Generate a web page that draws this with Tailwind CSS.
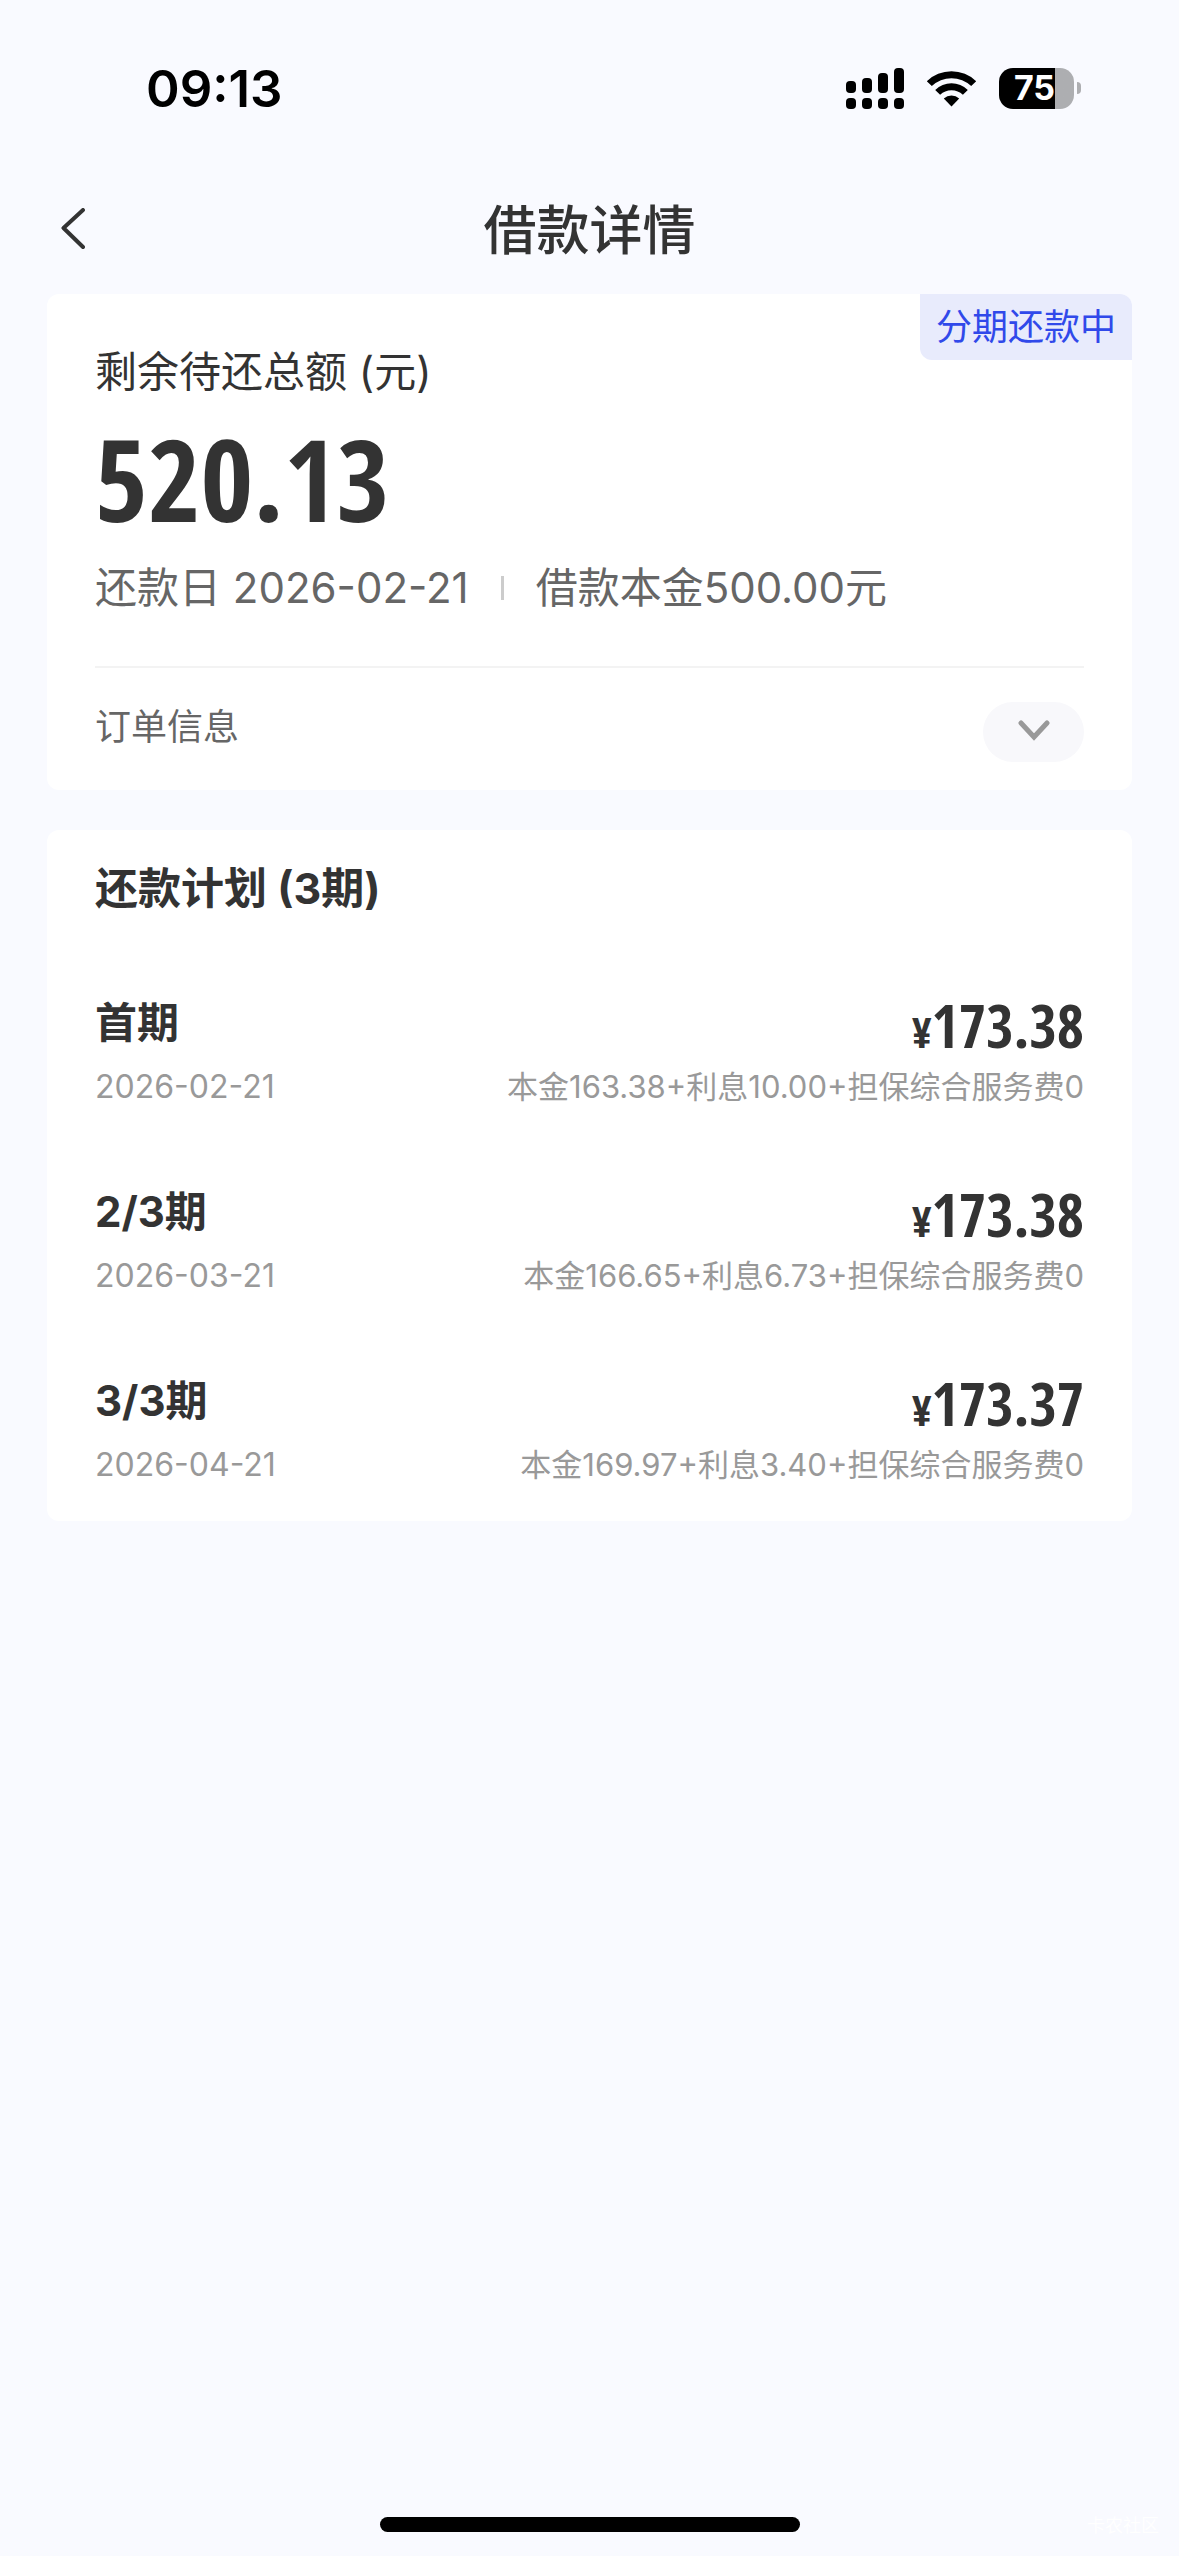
<!DOCTYPE html>
<html lang="zh-CN">
<head>
  <meta charset="UTF-8">
  <meta name="viewport" content="width=device-width, initial-scale=1.0">
  <title>借款详情</title>
  <script src="https://cdn.jsdelivr.net/npm/@tailwindcss/browser@4"></script>
</head>
<body class="relative flex min-h-screen flex-col bg-[#f9faff] font-['Inter','Noto_Sans_CJK_SC',sans-serif] text-[#333333]">

  <!-- status bar -->
  <div class="flex h-44 items-center justify-between pr-[98px] pl-[146px] text-black">
    <span class="text-[51px] leading-none font-semibold">09:13</span>
    <div class="flex items-center gap-[22px]">
      <svg class="h-[41px] w-[58px]" viewBox="0 0 58 41" fill="currentColor">
        <rect x="0" y="13" width="10" height="12" rx="4"/>
        <rect x="16" y="10" width="10" height="15" rx="4"/>
        <rect x="32" y="5" width="10" height="20" rx="4"/>
        <rect x="48" y="0" width="10" height="25" rx="4"/>
        <rect x="0" y="30" width="10" height="11" rx="4"/>
        <rect x="16" y="30" width="10" height="11" rx="4"/>
        <rect x="32" y="30" width="10" height="11" rx="4"/>
        <rect x="48" y="30" width="10" height="11" rx="4"/>
      </svg>
      <svg class="h-[37px] w-[51px]" viewBox="0 0 51 37" fill="currentColor">
        <path d="M0.8 11.2A35.5 35.5 0 0 1 50.2 11.2L45.2 16.1A28.5 28.5 0 0 0 5.8 16.1Z"/>
        <path d="M9.2 20A23.3 23.3 0 0 1 41.8 20L36.9 24.8A16.4 16.4 0 0 0 14.1 24.8Z"/>
        <path d="M17.8 28.6A11.4 11.4 0 0 1 33.2 28.6L25.5 36.6Z"/>
      </svg>
      <div class="flex items-center gap-[3px]">
        <div class="flex h-[41px] w-[75px] items-center justify-center rounded-[14px] bg-linear-to-r from-black from-75% to-[#adaeb1] to-75% pr-1 text-[34px] leading-none font-bold text-white">75</div>
        <div class="h-3 w-1 rounded-r-full bg-[#adaeb1]"></div>
      </div>
    </div>
  </div>

  <!-- title bar -->
  <header class="grid h-[106px] grid-cols-[1fr_auto_1fr] items-center px-12">
    <button type="button" aria-label="返回" class="flex size-13 items-center justify-center">
      <svg class="h-[42px] w-[26px]" viewBox="0 0 26 42" fill="none" stroke="currentColor" stroke-width="4" stroke-linecap="round" stroke-linejoin="round">
        <path d="M22 2 2.5 20 22 39"/>
      </svg>
    </button>
    <h1 class="pt-1 text-[53px] leading-none font-medium">借款详情</h1>
  </header>

  <main class="flex flex-col gap-10 px-[47px] pt-3">
    <section class="relative rounded-xl bg-white px-12 pt-12 pb-7">
      <span class="absolute top-0 right-0 rounded-tr-xl rounded-bl-xl bg-[#e8ebfc] px-4 text-[36px] leading-[66px] text-[#3049ea]">分期还款中</span>
      <h2 class="text-[42px] leading-[60px]">剩余待还总额 (元)</h2>
      <p class="mt-4 font-['Open_Sans_Condensed','Roboto_Condensed',sans-serif] text-[114px] leading-[120px] font-bold">520.13</p>
      <div class="mt-5 flex items-center text-[42px] leading-[60px] text-[#666666]">
        <span>还款日 2026-02-21</span>
        <span class="mx-8 h-6 w-[3px] bg-[#cccccc]"></span>
        <span>借款本金500.00元</span>
      </div>
      <div class="mt-12 flex items-start justify-between border-t-2 border-[#f3f3f3] pt-[34px]">
        <span class="text-[36px] leading-[50px] text-[#666666]">订单信息</span>
        <button type="button" aria-label="展开订单信息" class="flex h-15 w-[101px] items-center justify-center rounded-full bg-[#f8f8fb]">
          <svg class="h-6 w-8 text-[#999999]" viewBox="0 0 32 24" fill="none" stroke="currentColor" stroke-width="5" stroke-linecap="round" stroke-linejoin="miter">
            <path d="M3 3 16 17 29 3"/>
          </svg>
        </button>
      </div>
    </section>

    <section class="rounded-xl bg-white px-12 pt-7 pb-9">
      <h2 class="text-[43px] leading-[60px] font-bold">还款计划 (3期)</h2>
      <ul class="mt-[75px] flex flex-col gap-[75px]">
        <li class="flex flex-col gap-[14px]">
          <div class="flex h-15 items-center justify-between leading-none font-bold">
            <span class="text-[42px]">首期</span>
            <span class="pt-1 font-['Open_Sans_Condensed','Roboto_Condensed',sans-serif] text-[59px]"><span class="text-[42px]">¥</span>173.38</span>
          </div>
          <div class="flex h-10 items-center justify-between leading-10 text-[#999999]">
            <span class="text-[32px]">2026-02-21</span>
            <span class="text-[31px]">本金163.38+利息10.00+担保综合服务费0</span>
          </div>
        </li>
        <li class="flex flex-col gap-[14px]">
          <div class="flex h-15 items-center justify-between leading-none font-bold">
            <span class="text-[42px]">2/3期</span>
            <span class="pt-1 font-['Open_Sans_Condensed','Roboto_Condensed',sans-serif] text-[59px]"><span class="text-[42px]">¥</span>173.38</span>
          </div>
          <div class="flex h-10 items-center justify-between leading-10 text-[#999999]">
            <span class="text-[32px]">2026-03-21</span>
            <span class="text-[31px]">本金166.65+利息6.73+担保综合服务费0</span>
          </div>
        </li>
        <li class="flex flex-col gap-[14px]">
          <div class="flex h-15 items-center justify-between leading-none font-bold">
            <span class="text-[42px]">3/3期</span>
            <span class="pt-1 font-['Open_Sans_Condensed','Roboto_Condensed',sans-serif] text-[59px]"><span class="text-[42px]">¥</span>173.37</span>
          </div>
          <div class="flex h-10 items-center justify-between leading-10 text-[#999999]">
            <span class="text-[32px]">2026-04-21</span>
            <span class="text-[31px]">本金169.97+利息3.40+担保综合服务费0</span>
          </div>
        </li>
      </ul>
    </section>
  </main>

  <!-- home indicator -->
  <footer class="mt-auto flex justify-center pb-6">
    <div class="h-[15px] w-[420px] rounded-full bg-black"></div>
  </footer>
  <span class="absolute right-5 bottom-4 text-[18px] leading-7 text-white">卡农社区</span>
</body>
</html>
